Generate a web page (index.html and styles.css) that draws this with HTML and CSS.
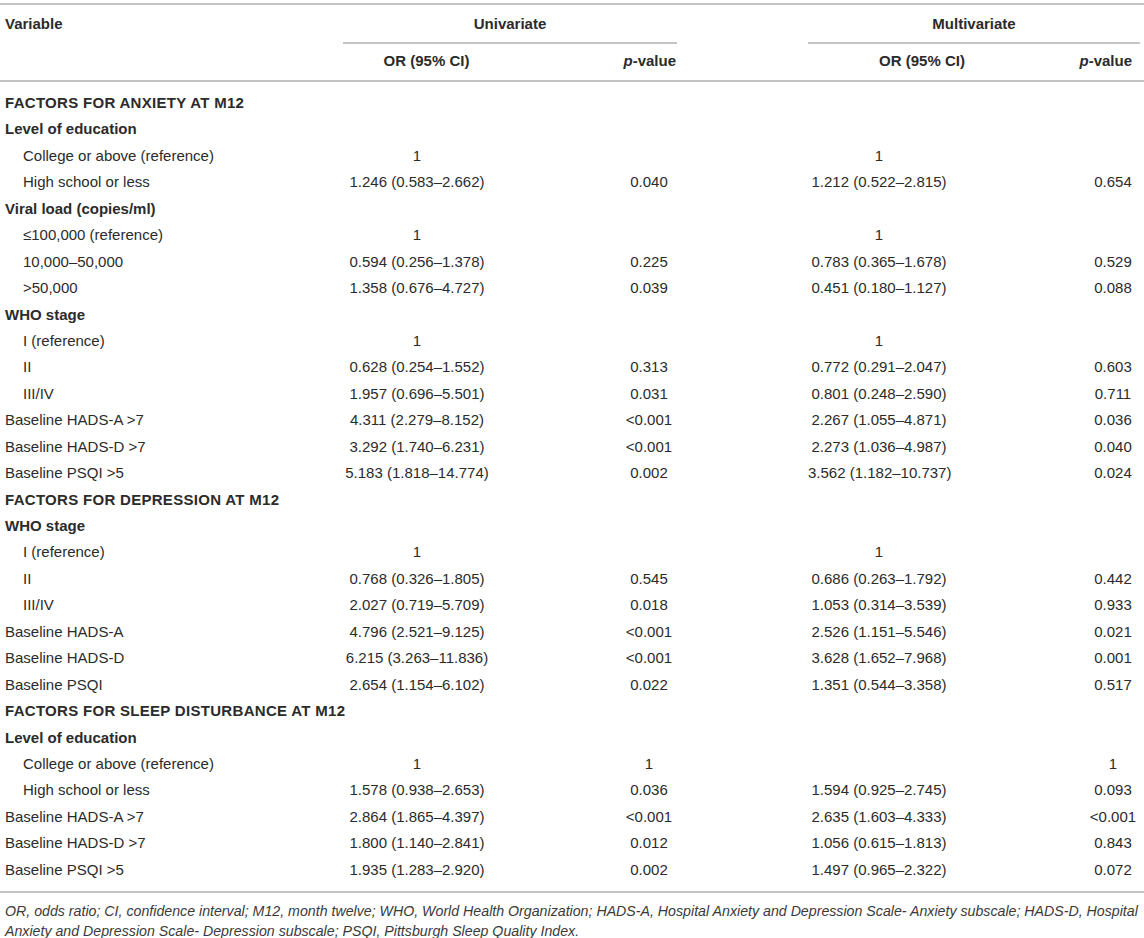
FILE: index.html
```html
<!DOCTYPE html>
<html lang="en">
<head>
<meta charset="utf-8">
<title>Table</title>
<link rel="stylesheet" href="styles.css">
</head>
<body>
<div class="table">
  <div class="head">
    <div class="hrow1">
      <div class="hv">Variable</div>
      <div class="hgroup g1">Univariate</div>
      <div class="hgroup g2">Multivariate</div>
    </div>
    <div class="hrow2">
      <div class="hor h1">OR (95% CI)</div>
      <div class="hp h2"><i>p</i>-value</div>
      <div class="hor h3">OR (95% CI)</div>
      <div class="hp h4"><i>p</i>-value</div>
    </div>
  </div>
  <div class="body">
    <div class="row sec">FACTORS FOR ANXIETY AT M12</div>
    <div class="row sub">Level of education</div>
    <div class="row"><div class="v ind">College or above (reference)</div><div class="or1">1</div><div class="p1"></div><div class="or2">1</div><div class="p2"></div></div>
    <div class="row"><div class="v ind">High school or less</div><div class="or1">1.246 (0.583–2.662)</div><div class="p1">0.040</div><div class="or2">1.212 (0.522–2.815)</div><div class="p2">0.654</div></div>
    <div class="row sub">Viral load (copies/ml)</div>
    <div class="row"><div class="v ind">≤100,000 (reference)</div><div class="or1">1</div><div class="p1"></div><div class="or2">1</div><div class="p2"></div></div>
    <div class="row"><div class="v ind">10,000–50,000</div><div class="or1">0.594 (0.256–1.378)</div><div class="p1">0.225</div><div class="or2">0.783 (0.365–1.678)</div><div class="p2">0.529</div></div>
    <div class="row"><div class="v ind">&gt;50,000</div><div class="or1">1.358 (0.676–4.727)</div><div class="p1">0.039</div><div class="or2">0.451 (0.180–1.127)</div><div class="p2">0.088</div></div>
    <div class="row sub">WHO stage</div>
    <div class="row"><div class="v ind">I (reference)</div><div class="or1">1</div><div class="p1"></div><div class="or2">1</div><div class="p2"></div></div>
    <div class="row"><div class="v ind">II</div><div class="or1">0.628 (0.254–1.552)</div><div class="p1">0.313</div><div class="or2">0.772 (0.291–2.047)</div><div class="p2">0.603</div></div>
    <div class="row"><div class="v ind">III/IV</div><div class="or1">1.957 (0.696–5.501)</div><div class="p1">0.031</div><div class="or2">0.801 (0.248–2.590)</div><div class="p2">0.711</div></div>
    <div class="row"><div class="v">Baseline HADS-A &gt;7</div><div class="or1">4.311 (2.279–8.152)</div><div class="p1">&lt;0.001</div><div class="or2">2.267 (1.055–4.871)</div><div class="p2">0.036</div></div>
    <div class="row"><div class="v">Baseline HADS-D &gt;7</div><div class="or1">3.292 (1.740–6.231)</div><div class="p1">&lt;0.001</div><div class="or2">2.273 (1.036–4.987)</div><div class="p2">0.040</div></div>
    <div class="row"><div class="v">Baseline PSQI &gt;5</div><div class="or1">5.183 (1.818–14.774)</div><div class="p1">0.002</div><div class="or2">3.562 (1.182–10.737)</div><div class="p2">0.024</div></div>

    <div class="row sec">FACTORS FOR DEPRESSION AT M12</div>
    <div class="row sub">WHO stage</div>
    <div class="row"><div class="v ind">I (reference)</div><div class="or1">1</div><div class="p1"></div><div class="or2">1</div><div class="p2"></div></div>
    <div class="row"><div class="v ind">II</div><div class="or1">0.768 (0.326–1.805)</div><div class="p1">0.545</div><div class="or2">0.686 (0.263–1.792)</div><div class="p2">0.442</div></div>
    <div class="row"><div class="v ind">III/IV</div><div class="or1">2.027 (0.719–5.709)</div><div class="p1">0.018</div><div class="or2">1.053 (0.314–3.539)</div><div class="p2">0.933</div></div>
    <div class="row"><div class="v">Baseline HADS-A</div><div class="or1">4.796 (2.521–9.125)</div><div class="p1">&lt;0.001</div><div class="or2">2.526 (1.151–5.546)</div><div class="p2">0.021</div></div>
    <div class="row"><div class="v">Baseline HADS-D</div><div class="or1">6.215 (3.263–11.836)</div><div class="p1">&lt;0.001</div><div class="or2">3.628 (1.652–7.968)</div><div class="p2">0.001</div></div>
    <div class="row"><div class="v">Baseline PSQI</div><div class="or1">2.654 (1.154–6.102)</div><div class="p1">0.022</div><div class="or2">1.351 (0.544–3.358)</div><div class="p2">0.517</div></div>

    <div class="row sec">FACTORS FOR SLEEP DISTURBANCE AT M12</div>
    <div class="row sub">Level of education</div>
    <div class="row"><div class="v ind">College or above (reference)</div><div class="or1">1</div><div class="p1">1</div><div class="or2"></div><div class="p2">1</div></div>
    <div class="row"><div class="v ind">High school or less</div><div class="or1">1.578 (0.938–2.653)</div><div class="p1">0.036</div><div class="or2">1.594 (0.925–2.745)</div><div class="p2">0.093</div></div>
    <div class="row"><div class="v">Baseline HADS-A &gt;7</div><div class="or1">2.864 (1.865–4.397)</div><div class="p1">&lt;0.001</div><div class="or2">2.635 (1.603–4.333)</div><div class="p2">&lt;0.001</div></div>
    <div class="row"><div class="v">Baseline HADS-D &gt;7</div><div class="or1">1.800 (1.140–2.841)</div><div class="p1">0.012</div><div class="or2">1.056 (0.615–1.813)</div><div class="p2">0.843</div></div>
    <div class="row"><div class="v">Baseline PSQI &gt;5</div><div class="or1">1.935 (1.283–2.920)</div><div class="p1">0.002</div><div class="or2">1.497 (0.965–2.322)</div><div class="p2">0.072</div></div>
  </div>
  <p class="note">OR, odds ratio; CI, confidence interval; M12, month twelve; WHO, World Health Organization; HADS-A, Hospital Anxiety and Depression Scale- Anxiety subscale; HADS-D, Hospital<br>Anxiety and Depression Scale- Depression subscale; PSQI, Pittsburgh Sleep Quality Index.</p>
</div>
</body>
</html>
```

FILE: styles.css
```css
html, body {
  margin: 0;
  padding: 0;
  background: #ffffff;
}

body {
  font-family: "Liberation Sans", Arial, sans-serif;
  font-size: 15px;
  color: #2b2b2b;
}

.table {
  padding-top: 3px;
}

.head {
  border-top: 2px solid #c4c4c4;
  border-bottom: 2px solid #c4c4c4;
}

.hrow1 {
  display: grid;
  grid-template-columns: 343px 334px 131px 332px 4px;
  height: 37px;
  font-weight: bold;
}

.hv {
  grid-column: 1;
  padding-left: 5px;
  line-height: 37px;
}

.hgroup {
  text-align: center;
  line-height: 37px;
  border-bottom: 2px solid #c4c4c4;
}

.g1 { grid-column: 2; }
.g2 { grid-column: 4; }

.hrow2 {
  display: grid;
  grid-template-columns: 343px 167px 167px 131px 228px 104px 4px;
  height: 38px;
  line-height: 38px;
  font-weight: bold;
}

.h1 { grid-column: 2; text-align: center; }
.h2 { grid-column: 3; text-align: right; padding-right: 1px; }
.h3 { grid-column: 5; text-align: center; }
.h4 { grid-column: 6; text-align: right; padding-right: 8px; }

.hp i {
  font-style: italic;
}

.body {
  padding: 8px 0 8px;
  border-bottom: 2px solid #c4c4c4;
}

.row {
  display: grid;
  grid-template-columns: 343px 148px 130px 56px 131px 142px 136px 54px 4px;
  height: 26.45px;
  line-height: 26.45px;
  white-space: nowrap;
}

.sec, .sub {
  display: block;
  font-weight: bold;
  padding-left: 5px;
}

.sec {
  letter-spacing: 0.3px;
}

.v {
  grid-column: 1;
  padding-left: 5px;
}

.v.ind {
  padding-left: 23px;
}

.or1 { grid-column: 2; text-align: center; }
.p1  { grid-column: 4; text-align: center; }
.or2 { grid-column: 6; text-align: center; }
.p2  { grid-column: 8; text-align: center; }

.note {
  margin: 8px 0 0;
  padding-left: 5px;
  font-size: 14.2px;
  line-height: 20px;
  font-style: italic;
  color: #3a3a3a;
  white-space: nowrap;
}
```
